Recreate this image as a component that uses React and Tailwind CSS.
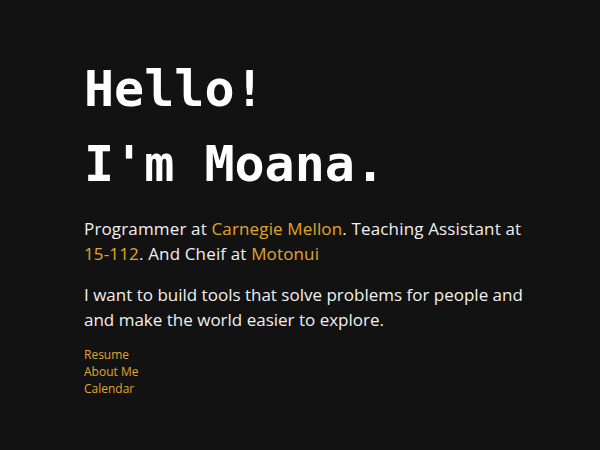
export default function App() {
  const body = { fontFamily: '"Open Sans", "DejaVu Sans", sans-serif' }
  const mono = { fontFamily: '"DejaVu Sans Mono", "Liberation Mono", monospace' }
  return (
    <div className="min-h-[450px] w-full bg-[#121212] text-[#f0f0f0]">
      <main className="pl-[84px] pr-4 pt-[52px]" style={body}>
        <h1 className="text-[50px] font-bold leading-[75px] text-white" style={mono}>
          Hello!
          <br />
          I'm Moana.
        </h1>
        <p className="mt-[14px] max-w-[460px] text-[17px] leading-[25px] tracking-[0.15px]">
          Programmer at <a className="text-[#e1a52a]">Carnegie Mellon</a>. Teaching Assistant at
          <br />
          <a className="text-[#e1a52a]">15-112</a>. And Cheif at <a className="text-[#e1a52a]">Motonui</a>
        </p>
        <p className="mt-[16px] max-w-[460px] text-[17px] leading-[25px]">
          I want to build tools that solve problems for people and
          <br />
          and make the world easier to explore.
        </p>
        <nav className="mt-[14px] flex flex-col text-[12px] leading-[17px] text-[#e1a52a]">
          <a>Resume</a>
          <a>About Me</a>
          <a>Calendar</a>
        </nav>
      </main>
    </div>
  )
}
